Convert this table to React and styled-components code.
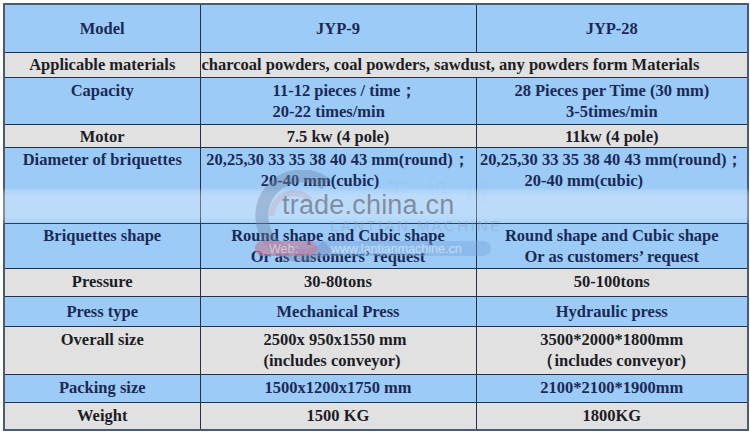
import React from 'react';
import styled, { createGlobalStyle } from 'styled-components';

const Global = createGlobalStyle`
  html, body { margin: 0; padding: 0; background: #ffffff; }
  body {
    width: 750px; height: 432px; overflow: hidden;
    font-family: "Liberation Serif", serif;
  }
`;

const Frame = styled.div`
  position: relative;
  padding: 3px 3px 0 3px;
  width: 744px;
`;

const Table = styled.table`
  width: 744px;
  border-collapse: collapse;
  table-layout: fixed;
  border: 2px solid #4d5b72;
  font-family: "Liberation Serif", serif;
`;

const Row = styled.tr`
  height: ${(p) => p.$h}px;
  background: ${(p) => (p.$tone === 'blue' ? '#9ccbf8' : '#e1e1e1')};
  color: ${(p) => (p.$tone === 'blue' ? '#1b2a55' : '#1d1d25')};
`;

const Cell = styled.td`
  border: 1px solid #24304a;
  padding: ${(p) => p.$pt ?? 2}px 2px 0 ${(p) => p.$pl ?? 2}px;
  text-align: ${(p) => p.$align || 'center'};
  vertical-align: ${(p) => p.$valign || 'top'};
  font-family: "Liberation Serif", serif;
  font-weight: 700;
  font-size: 16.5px;
  line-height: 21px;
  white-space: nowrap;
  overflow: hidden;
`;

const Line = styled.div`
  padding-right: ${(p) => p.$shift || 0}px;
`;

const LeftBlock = styled.div`
  display: inline-block;
  text-align: left;
  margin-left: ${(p) => p.$ml || 0}px;
`;

/* watermark overlay */
const Watermark = styled.div`
  position: absolute;
  left: 0;
  top: 0;
  width: 750px;
  height: 432px;
  pointer-events: none;
`;

const Band = styled.div`
  position: absolute;
  left: 0;
  top: 189px;
  width: 750px;
  height: 34px;
  background: linear-gradient(
    to bottom,
    rgba(255, 255, 255, 0.15),
    rgba(255, 255, 255, 0.32) 20%,
    rgba(255, 255, 255, 0.32) 80%,
    rgba(255, 255, 255, 0.15)
  );
  filter: blur(1px);
`;

const Logo = styled.svg`
  position: absolute;
  left: 248px;
  top: 170px;
  opacity: 0.4;
`;

const TradeText = styled.div`
  position: absolute;
  left: 282px;
  top: 188px;
  font-family: "Liberation Sans", Arial, sans-serif;
  font-size: 27px;
  line-height: 34px;
  color: rgba(110, 120, 136, 0.78);
  letter-spacing: 0.2px;
`;

const Brand = styled.div`
  position: absolute;
  left: 330px;
  top: 218px;
  font-family: "Liberation Sans", Arial, sans-serif;
  font-size: 15px;
  line-height: 16px;
  letter-spacing: 2.4px;
  color: rgba(140, 160, 190, 0.45);
`;

const Cn = styled.div`
  position: absolute;
  left: 345px;
  top: 178px;
  font-family: "Noto Sans CJK SC", sans-serif;
  font-size: 24px;
  line-height: 26px;
  letter-spacing: 16px;
  color: rgba(120, 140, 170, 0.08);
`;

const Pill = styled.div`
  position: absolute;
  left: 255px;
  top: 241px;
  width: 236px;
  height: 15px;
  border-radius: 8px;
  background: rgba(120, 160, 220, 0.4);
  display: flex;
  align-items: center;
  font-family: "Liberation Sans", Arial, sans-serif;
  font-size: 12.5px;
  color: rgba(255, 255, 255, 0.5);
`;

const PillTag = styled.span`
  width: 62px;
  height: 15px;
  border-radius: 8px;
  background: rgba(225, 110, 130, 0.45);
  display: flex;
  align-items: center;
  padding-left: 14px;
  box-sizing: border-box;
  margin-right: 14px;
`;

export default function App() {
  return (
    <Frame>
      <Global />
      <Table>
        <colgroup>
          <col style={{ width: 196 }} />
          <col style={{ width: 276 }} />
          <col style={{ width: 272 }} />
        </colgroup>
        <tbody>
          <Row $h={48} $tone="blue">
            <Cell $valign="middle" $pt={0}>Model</Cell>
            <Cell $valign="middle" $pt={0}>JYP-9</Cell>
            <Cell $valign="middle" $pt={0}>JYP-28</Cell>
          </Row>
          <Row $h={25} $tone="grey">
            <Cell $valign="middle" $pt={0}>Applicable materials</Cell>
            <Cell colSpan={2} $align="left" $valign="middle" $pt={0} $pl={1}>
              charcoal powders, coal powders, sawdust, any powders form Materials
            </Cell>
          </Row>
          <Row $h={47} $tone="blue">
            <Cell>Capacity</Cell>
            <Cell>
              <LeftBlock $ml={14}>
                <div>11-12 pieces / time；</div>
                <div>20-22 times/min</div>
              </LeftBlock>
            </Cell>
            <Cell>
              <Line>28 Pieces per Time (30 mm)</Line>
              <Line>3-5times/min</Line>
            </Cell>
          </Row>
          <Row $h={23} $tone="grey">
            <Cell $pt={1}>Motor</Cell>
            <Cell $pt={1}>7.5 kw (4 pole)</Cell>
            <Cell $pt={1}>11kw (4 pole)</Cell>
          </Row>
          <Row $h={76} $tone="blue">
            <Cell $pt={1}>Diameter of briquettes</Cell>
            <Cell $pt={1}>
              <Line>20,25,30 33 35 38 40 43 mm(round)；</Line>
              <Line $shift={36}>20-40 mm(cubic)</Line>
            </Cell>
            <Cell $pt={1}>
              <Line>20,25,30 33 35 38 40 43 mm(round)；</Line>
              <Line $shift={56}>20-40 mm(cubic)</Line>
            </Cell>
          </Row>
          <Row $h={45} $tone="blue">
            <Cell $pt={1}>Briquettes shape</Cell>
            <Cell $pt={1}>
              <Line>Round shape and Cubic shape</Line>
              <Line>Or as customers’ request</Line>
            </Cell>
            <Cell $pt={1}>
              <Line>Round shape and Cubic shape</Line>
              <Line>Or as customers’ request</Line>
            </Cell>
          </Row>
          <Row $h={28} $tone="grey">
            <Cell>Pressure</Cell>
            <Cell>30-80tons</Cell>
            <Cell>50-100tons</Cell>
          </Row>
          <Row $h={30} $tone="blue">
            <Cell $valign="middle" $pt={0}>Press type</Cell>
            <Cell $valign="middle" $pt={0}>Mechanical Press</Cell>
            <Cell $valign="middle" $pt={0}>Hydraulic press</Cell>
          </Row>
          <Row $h={48} $tone="grey">
            <Cell>Overall size</Cell>
            <Cell>
              <LeftBlock $ml={-6}>
                <div>2500x 950x1550 mm</div>
                <div>(includes conveyor)</div>
              </LeftBlock>
            </Cell>
            <Cell>
              <Line>3500*2000*1800mm</Line>
              <Line>（includes conveyor)</Line>
            </Cell>
          </Row>
          <Row $h={28} $tone="blue">
            <Cell>Packing size</Cell>
            <Cell>1500x1200x1750 mm</Cell>
            <Cell>2100*2100*1900mm</Cell>
          </Row>
          <Row $h={28} $tone="grey">
            <Cell>Weight</Cell>
            <Cell>1500 KG</Cell>
            <Cell>1800KG</Cell>
          </Row>
        </tbody>
      </Table>

      <Watermark>
        <Cn>蓝天机械</Cn>
        <Band />
        <Logo width="100" height="92" viewBox="0 0 100 92">
          <path
            d="M78 14 A40 40 0 1 0 80 76"
            fill="none"
            stroke="#6f86a8"
            strokeWidth="13"
          />
          <path d="M24 46 A22 22 0 0 1 62 30" fill="none" stroke="#c87a86" strokeWidth="6" opacity="0.5" />
        </Logo>
        <TradeText>trade.china.cn</TradeText>
        <Brand>LANTIAN MACHINE</Brand>
        <Pill>
          <PillTag>Web:</PillTag>
          www.lantianmachine.cn
        </Pill>
      </Watermark>
    </Frame>
  );
}
